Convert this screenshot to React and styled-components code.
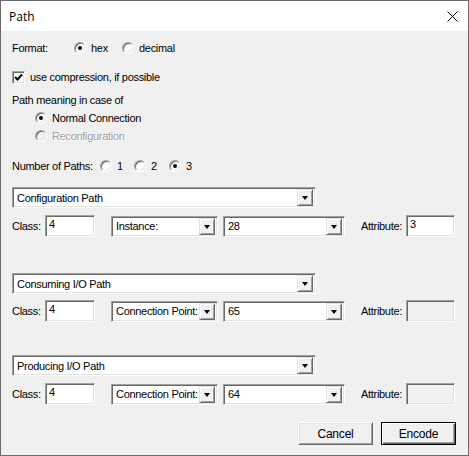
import React from 'react';
import styled, { createGlobalStyle } from 'styled-components';

const GlobalStyle = createGlobalStyle`
  html, body {
    margin: 0;
    padding: 0;
    background: #ffffff;
  }
`;

const Window = styled.div`
  width: 469px;
  height: 456px;
  box-sizing: border-box;
  border: 1px solid #6b6b6b;
  background: #f0f0f0;
  display: flex;
  flex-direction: column;
  font-family: "Liberation Sans", Arial, sans-serif;
  font-size: 11px;
  letter-spacing: -0.3px;
  color: #000;
`;

const TitleBar = styled.div`
  height: 30px;
  background: #ffffff;
  display: flex;
  align-items: center;
  justify-content: space-between;
  padding: 0 10px 0 8px;
  font-family: "Open Sans", "Noto Sans", sans-serif;
  font-size: 12px;
  letter-spacing: 0;
`;

const CloseIcon = styled.svg`
  width: 11px;
  height: 11px;
`;

const Body = styled.div`
  flex: 1;
  display: flex;
  flex-direction: column;
  padding: 0 12px 0 11px;
`;

const Line = styled.div`
  display: flex;
  align-items: center;
  height: 16px;
  margin-top: ${p => p.mt || 0}px;
  padding-left: ${p => p.indent || 0}px;
`;

const Label = styled.span`
  width: ${p => (p.w ? `${p.w}px` : 'auto')};
  flex-shrink: 0;
  white-space: nowrap;
`;

const Option = styled.label`
  display: flex;
  align-items: center;
  width: ${p => (p.w ? `${p.w}px` : 'auto')};
  color: ${p => (p.disabled ? '#a0a0a0' : '#000')};
  text-shadow: ${p => (p.disabled ? '1px 1px 0 #ffffff' : 'none')};
`;

const Radio = styled.span`
  width: 12px;
  height: 12px;
  box-sizing: border-box;
  border-radius: 50%;
  border: 1px solid;
  border-color: #a0a0a0 #ffffff #ffffff #a0a0a0;
  box-shadow: inset 1px 1px 0 #696969, inset -1px -1px 0 #e3e3e3;
  background: ${p => (p.disabled ? '#f0f0f0' : '#ffffff')};
  position: relative;
  margin-right: ${p => p.gap || 5}px;
  flex-shrink: 0;

  &::after {
    content: '';
    display: ${p => (p.checked ? 'block' : 'none')};
    position: absolute;
    left: 3px;
    top: 3px;
    width: 4px;
    height: 4px;
    border-radius: 50%;
    background: #000;
  }
`;

const CheckBox = styled.span`
  width: 13px;
  height: 13px;
  box-sizing: border-box;
  border: 1px solid;
  border-color: #a0a0a0 #ffffff #ffffff #a0a0a0;
  box-shadow: inset 1px 1px 0 #696969, inset -1px -1px 0 #e3e3e3;
  background: #ffffff;
  display: flex;
  align-items: center;
  justify-content: center;
  margin-right: 5px;
`;

const Sunken = styled.div`
  box-sizing: border-box;
  border: 1px solid;
  border-color: #a0a0a0 #ffffff #ffffff #a0a0a0;
  box-shadow: inset 1px 1px 0 #696969, inset -1px -1px 0 #e3e3e3;
  background: ${p => (p.disabled ? '#f0f0f0' : '#ffffff')};
`;

const Edit = styled(Sunken)`
  width: ${p => p.w}px;
  height: 22px;
  padding: 2px 0 0 3px;
  line-height: 13px;
  flex-shrink: 0;
`;

const Combo = styled(Sunken)`
  width: ${p => p.w}px;
  height: 21px;
  display: flex;
  align-items: center;
  padding: 2px;
  flex-shrink: 0;
  margin-top: ${p => p.mt || 0}px;
`;

const ComboText = styled.span`
  flex: 1;
  min-width: 0;
  padding-left: 2px;
  white-space: nowrap;
  overflow: hidden;
`;

const DropButton = styled.span`
  width: 16px;
  height: 17px;
  box-sizing: border-box;
  background: #f0f0f0;
  border: 1px solid;
  border-color: #e3e3e3 #696969 #696969 #e3e3e3;
  box-shadow: inset 1px 1px 0 #ffffff, inset -1px -1px 0 #a0a0a0;
  display: flex;
  align-items: center;
  justify-content: center;
  flex-shrink: 0;
`;

const Arrow = styled.span`
  width: 0;
  height: 0;
  border-left: 3.5px solid transparent;
  border-right: 3.5px solid transparent;
  border-top: 4px solid #000;
  margin-top: 1px;
`;

const FieldRow = styled.div`
  display: flex;
  align-items: center;
  height: 22px;
  margin-top: ${p => p.mt || 0}px;
`;

const Spacer = styled.span`
  width: ${p => p.w}px;
  flex-shrink: 0;
`;

const ButtonBar = styled.div`
  display: flex;
  justify-content: flex-end;
  gap: 8px;
  margin-top: 17px;
`;

const PushButton = styled.button`
  width: 75px;
  height: 23px;
  box-sizing: border-box;
  font-family: "Liberation Sans", Arial, sans-serif;
  font-size: 12px;
  letter-spacing: -0.2px;
  color: #000;
  background: #f0f0f0;
  padding: 0;
  border: 1px solid;
  border-color: ${p => (p.primary ? '#000' : '#ffffff #696969 #696969 #ffffff')};
  box-shadow: ${p =>
    p.primary
      ? 'inset 1px 1px 0 #ffffff, inset -1px -1px 0 #696969, inset -2px -2px 0 #a0a0a0'
      : 'inset 1px 1px 0 #e3e3e3, inset -1px -1px 0 #a0a0a0'};
`;

const Dropdown = ({ w, text, mt }) => (
  <Combo w={w} mt={mt}>
    <ComboText>{text}</ComboText>
    <DropButton>
      <Arrow />
    </DropButton>
  </Combo>
);

const PathGroup = ({ title, kind, value, attribute, mt, rowGap }) => (
  <>
    <Dropdown w={304} text={title} mt={mt} />
    <FieldRow mt={rowGap}>
      <Label w={33}>Class:</Label>
      <Edit w={50}>4</Edit>
      <Spacer w={16} />
      <Dropdown w={107} text={kind} />
      <Spacer w={5} />
      <Dropdown w={122} text={value} />
      <Spacer w={16} />
      <Label w={45}>Attribute:</Label>
      <Edit w={49} disabled={attribute == null}>{attribute}</Edit>
    </FieldRow>
  </>
);

const App = () => {
  const groups = [
    { title: 'Configuration Path', kind: 'Instance:', value: '28', attribute: '3', mt: 13, rowGap: 7 },
    { title: 'Consuming I/O Path', kind: 'Connection Point:', value: '65', attribute: null, mt: 36, rowGap: 6 },
    { title: 'Producing I/O Path', kind: 'Connection Point:', value: '64', attribute: null, mt: 33, rowGap: 7 }
  ];

  return (
    <>
      <GlobalStyle />
      <Window>
        <TitleBar>
          <span>Path</span>
          <CloseIcon viewBox="0 0 11 11">
            <path d="M0.5 0.5 L10.5 10.5 M10.5 0.5 L0.5 10.5" stroke="#000" strokeWidth="1" fill="none" />
          </CloseIcon>
        </TitleBar>
        <Body>
          <Line mt={9}>
            <Label w={62}>Format:</Label>
            <Option w={48}>
              <Radio checked />hex
            </Option>
            <Option>
              <Radio />decimal
            </Option>
          </Line>
          <Line mt={13}>
            <CheckBox>
              <svg width="9" height="9" viewBox="0 0 9 9">
                <path d="M1 4 L3.5 6.5 L8 1.5" stroke="#000" strokeWidth="2" fill="none" />
              </svg>
            </CheckBox>
            use compression, if possible
          </Line>
          <Line mt={7}>Path meaning in case of</Line>
          <Line mt={2} indent={23}>
            <Option>
              <Radio checked />Normal Connection
            </Option>
          </Line>
          <Line mt={2} indent={23}>
            <Option disabled>
              <Radio disabled />Reconfiguration
            </Option>
          </Line>
          <Line mt={14}>
            <Label w={88}>Number of Paths:</Label>
            <Option w={34}>
              <Radio />1
            </Option>
            <Option w={35}>
              <Radio />2
            </Option>
            <Option>
              <Radio checked />3
            </Option>
          </Line>
          {groups.map((g, i) => (
            <PathGroup key={i} {...g} />
          ))}
          <ButtonBar>
            <PushButton>Cancel</PushButton>
            <PushButton primary>Encode</PushButton>
          </ButtonBar>
        </Body>
      </Window>
    </>
  );
};

export default App;
